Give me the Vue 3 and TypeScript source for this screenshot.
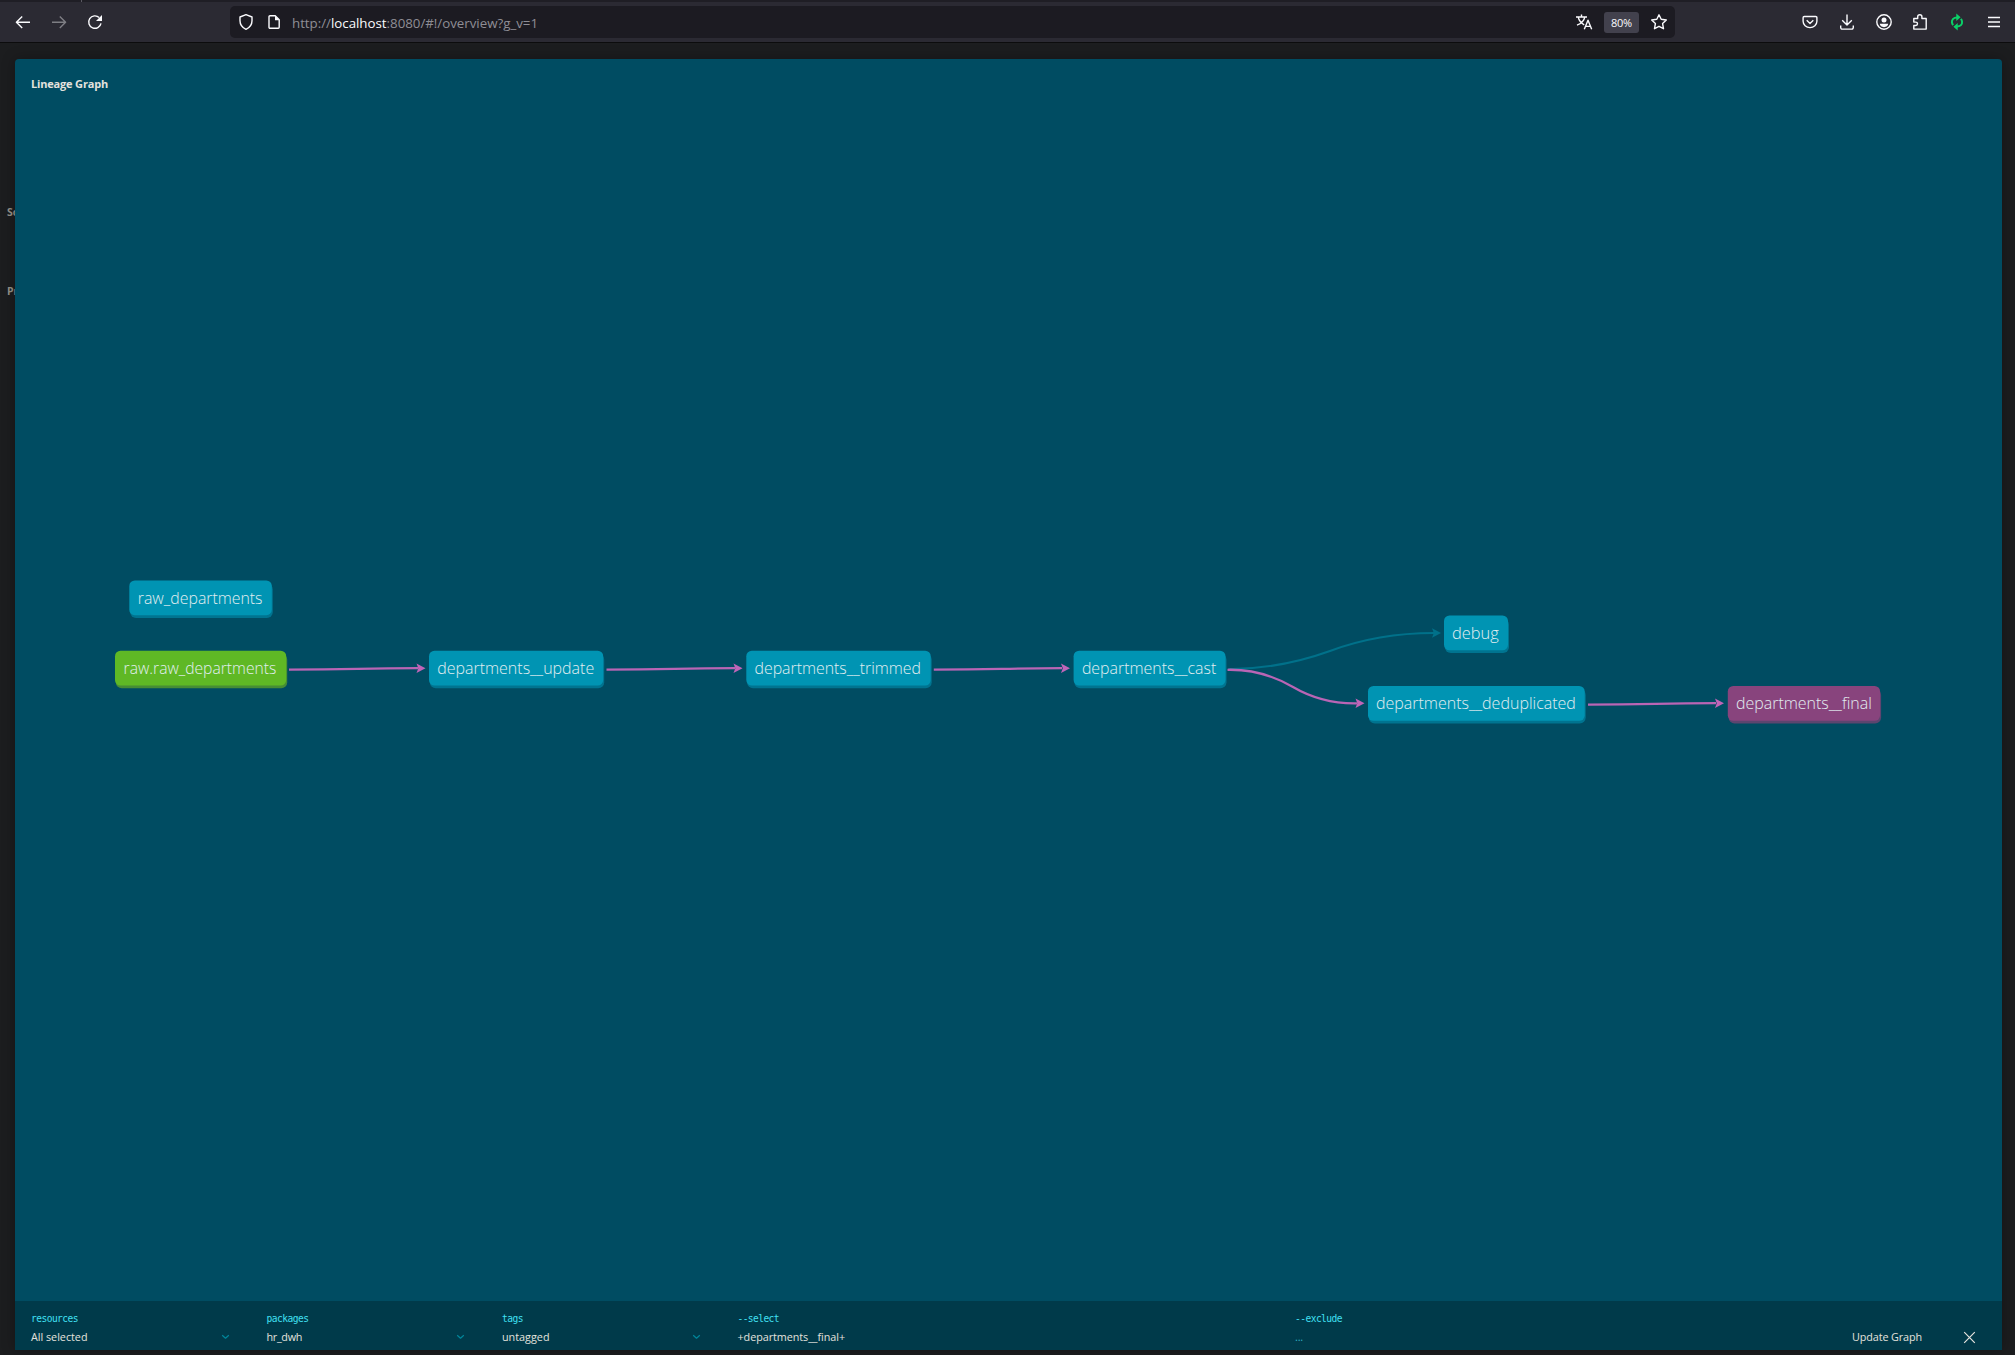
<script setup lang="ts">
interface GraphNode { label: string; x: number; y: number; w: number; tx: number; tw: number; kind: 'model' | 'source' | 'current' }
interface Edge { d: string; tipX: number; tipY: number; muted?: boolean }

const nodes: GraphNode[] = [
  { label: 'raw_departments', x: 129.3, y: 580.4, w: 142.5, tx: 137.8, tw: 124.7, kind: 'model' },
  { label: 'raw.raw_departments', x: 115, y: 650.7, w: 171.2, tx: 123.6, tw: 152.7, kind: 'source' },
  { label: 'departments__update', x: 429, y: 650.7, w: 174.2, tx: 437.2, tw: 157, kind: 'model' },
  { label: 'departments__trimmed', x: 746.3, y: 650.7, w: 184.4, tx: 754.5, tw: 166.5, kind: 'model' },
  { label: 'departments__cast', x: 1073.6, y: 650.7, w: 151.9, tx: 1081.9, tw: 134.4, kind: 'model' },
  { label: 'debug', x: 1444, y: 615.5, w: 64, tx: 1452, tw: 46.8, kind: 'model' },
  { label: 'departments__deduplicated', x: 1368, y: 686, w: 216.7, tx: 1375.9, tw: 200, kind: 'model' },
  { label: 'departments__final', x: 1727.8, y: 686, w: 152.3, tx: 1736, tw: 135.8, kind: 'current' },
]

const edges: Edge[] = [
  { d: 'M1228 669.3Q1280 669 1330 651Q1378 633 1434 633', tipX: 1440.5, tipY: 633, muted: true },
  { d: 'M289 669.6C357 669.6 357 668.2 418 668.2', tipX: 425, tipY: 668.2 },
  { d: 'M606.5 669.6C674 669.6 674 668.2 735 668.2', tipX: 742, tipY: 668.2 },
  { d: 'M933.8 669.6C1001 669.6 1001 668.2 1062 668.2', tipX: 1069.5, tipY: 668.2 },
  { d: 'M1227.5 669.8Q1262 669 1293 687Q1322 704 1357 703.3', tipX: 1364, tipY: 703.3 },
  { d: 'M1588 704.6C1655 704.6 1655 703.2 1716 703.2', tipX: 1723.5, tipY: 703.2 },
]

const filters = [
  { name: 'resources', nameW: 47, value: 'All selected', valueW: 56.5 },
  { name: 'packages', nameW: 42, value: 'hr_dwh', valueW: 35.5 },
  { name: 'tags', nameW: 21, value: 'untagged', valueW: 47.5 },
]

// Spreads letter-spacing so that a label occupies the given width.
const vFit = {
  mounted(el: HTMLElement, binding: { value: number }) {
    const width = el.getBoundingClientRect().width
    const count = (el.textContent ?? '').length
    el.style.letterSpacing = `${(binding.value - width) / count}px`
  },
}
</script>

<template>
  <div class="window">
    <div class="tabs"><i></i></div>
    <header class="toolbar">
      <nav class="nav">
        <svg width="16" height="16" viewBox="0 0 16 16"><path d="M15 8.2H1.6M7.2 2.4 1.4 8.2l5.8 5.8" /></svg>
        <svg class="dim" width="16" height="16" viewBox="0 0 16 16"><path d="M1 8.2h13.4M8.8 2.4l5.8 5.8L8.8 14" /></svg>
        <svg width="16" height="16" viewBox="0 0 16 16"><path d="M14 9.3A6.2 6.2 0 1 1 12.2 3.6" /><path class="solid" d="M15 1v6H9z" /></svg>
      </nav>
      <div class="address">
        <svg class="shield" width="16" height="18" viewBox="0 0 16 18"><path d="M8 1.6 14 4v3.8c0 4-2.2 6.8-6 8.6-3.8-1.8-6-4.6-6-8.6V4z" /></svg>
        <svg class="doc" width="14" height="16" viewBox="0 0 14 16"><path d="M3 1.8h5.2l4 4v7.4a1 1 0 0 1-1 1H3a1 1 0 0 1-1-1V2.8a1 1 0 0 1 1-1z" /><path class="solid" d="M8 1.5v4.7h4.6z" /></svg>
        <span v-fit="246" class="url">http://<b>localhost</b>:8080/#!/overview?g_v=1</span>
        <div class="address-end">
          <svg width="18" height="18" viewBox="0 0 18 18"><path d="M1 4h11M6.5 1.4V4M3.2 4.2c.7 3.2 3 6 6 7.6M9.8 4.2C9 8 5.8 10.8 2 12.2M9.3 16.2l3.7-9 3.7 9M10.5 13.4h5" /></svg>
          <span class="zoom"><span v-fit="21">80%</span></span>
          <svg class="star" width="18" height="18" viewBox="0 0 18 18"><path d="m9 1.8 2.2 4.5 5.1.7-3.7 3.6.9 5.1L9 13.3l-4.5 2.4.9-5.1L1.7 7l5.1-.7z" /></svg>
        </div>
      </div>
      <div class="tools">
        <svg width="18" height="18" viewBox="0 0 18 18"><path d="M3.3 3.5h11.4a1.200 1.200 0 0 1 1.200 1.200v3.600a6.900 6.300 0 0 1-13.800 0V4.700a1.200 1.200 0 0 1 1.200-1.200zM5.700 7.300 9 10.400l3.300-3.100" /></svg>
        <svg width="18" height="18" viewBox="0 0 18 18"><path d="M9 1.500v10.300M4.200 7.300 9 12l4.800-4.700M2.700 12.600v2a1.500 1.500 0 0 0 1.500 1.500h9.600a1.500 1.500 0 0 0 1.500-1.500v-2" /></svg>
        <svg width="18" height="18" viewBox="0 0 18 18"><circle cx="9" cy="9" r="7.200" /><circle class="solid" cx="9" cy="6.900" r="2.500" /><path class="solid" d="M4.800 10.800h8.400c0 1.800-1.800 3.400-4.200 3.400s-4.200-1.600-4.200-3.400z" /></svg>
        <svg width="18" height="18" viewBox="0 0 18 18"><path d="M2.800 5.500h3.900V3.800a2.100 2.100 0 0 1 4.200 0v1.700h4.300v10.600H2.800v-3.600h2a1.700 1.700 0 0 0 0-3.400h-2z" /></svg>
        <svg class="sync" width="18" height="18" viewBox="0 0 18 18"><path d="M9 4.400C5.600 4.400 3.700 6.700 3.900 9.200c.1 1.200.6 2.200 1.300 2.900M9 13.600c3.400 0 5.300-2.300 5.100-4.800-.1-1.200-.6-2.200-1.300-2.900" /><path class="solid" d="M8.300.6v7.400l4.300-3.700zM9.700 17.400V10l-4.300 3.700z" /></svg>
        <svg width="18" height="18" viewBox="0 0 18 18"><path d="M3 4.500h12M3 9h12M3 13.500h12" /></svg>
      </div>
    </header>

    <main class="page">
      <aside class="backdrop"><span>So</span><span>Pr</span></aside>
      <section class="panel">
        <h1><span v-fit="77">Lineage Graph</span></h1>
        <svg class="graph" width="1987" height="1242" viewBox="15 59 1987 1242">
          <g v-for="(e, i) in edges" :key="i" :class="['edge', { muted: e.muted }]">
            <path class="line" :d="e.d" />
            <path class="tip" :d="`M${e.tipX + 0.5} ${e.tipY}l-9 -4.800l1.800 4.800l-1.800 4.800z`" />
          </g>
          <g v-for="n in nodes" :key="n.label" :class="['node', n.kind]">
            <rect class="shade" :x="n.x + 0.8" :y="n.y + 3" :width="n.w + 0.2" height="34.500" rx="6" />
            <rect :x="n.x" :y="n.y" :width="n.w" height="34.800" rx="5.500" />
            <text :x="n.tx" :y="n.y + 23.2" :textLength="n.tw" lengthAdjust="spacingAndGlyphs">{{ n.label }}</text>
          </g>
        </svg>
        <footer class="filters">
          <div v-for="f in filters" :key="f.name" class="field">
            <label><span v-fit="f.nameW">{{ f.name }}</span></label>
            <p>
              <span v-fit="f.valueW">{{ f.value }}</span>
              <svg width="9" height="6" viewBox="0 0 9 6"><path d="m1.200 1.200 3.300 3 3.300-3" /></svg>
            </p>
          </div>
          <div class="field wide">
            <label><span v-fit="41.5">--select</span></label>
            <p><span v-fit="107.5">+departments__final+</span></p>
          </div>
          <div class="field last">
            <label><span v-fit="47">--exclude</span></label>
            <p class="placeholder"><span v-fit="8">...</span></p>
          </div>
          <div class="actions">
            <span v-fit="70" class="update">Update Graph</span>
            <svg width="13" height="13" viewBox="0 0 13 13"><path d="m1.200 1.200 10.600 10.600M11.800 1.200 1.200 11.800" /></svg>
          </div>
        </footer>
      </section>
    </main>
  </div>
</template>

<style>
body { margin: 0; background: #1c1d1f; }
</style>

<style scoped>
.window { width: 2015px; height: 1355px; overflow: hidden; display: flex; flex-direction: column; background: #1c1d1f; font-family: "Open Sans", "Noto Sans", sans-serif; color: #e4e2de; }
svg { display: block; flex: none; fill: none; stroke: #fbfbfe; stroke-width: 1.4; stroke-linejoin: round; }
.solid { fill: #fbfbfe; stroke: none; }
.tabs { height: 2px; background: #1f1e25; flex: none; }
.tabs i { display: block; width: 1px; height: 2px; margin-left: 81px; background: #5b5a63; }
.toolbar { height: 40px; flex: none; display: flex; align-items: center; background: #2b2a33; border-bottom: 1px solid #0c0c0d; }
.nav { display: flex; gap: 20px; width: 230px; padding-left: 15px; box-sizing: border-box; }
.nav .dim { opacity: .4; }
.address { width: 1445px; height: 32px; display: flex; align-items: center; background: #1c1b22; border-radius: 5px; }
.shield { margin-left: 8px; }
.doc { margin-left: 13px; }
.url { margin-left: 11px; font-size: 13.3px; color: #8f8e95; white-space: nowrap; padding-top: 1px; }
.url b { font-weight: 400; color: #fbfbfe; }
.address-end { margin-left: auto; display: flex; align-items: center; padding-right: 7px; }
.zoom { width: 35px; height: 21px; margin: 1px 11px 0; display: flex; align-items: center; justify-content: center; background: #42414d; border-radius: 3px; font-size: 11px; font-weight: 500; color: #fbfbfe; }
.tools { margin-left: auto; display: flex; gap: 18.8px; padding-right: 12px; }
.sync { stroke: #0bd068; stroke-width: 2; }
.sync .solid { fill: #0bd068; }
.page { flex: 1; display: flex; padding-top: 16px; }
.backdrop { width: 15px; overflow: hidden; flex: none; font-size: 10.5px; font-weight: 700; color: #96928a; }
.backdrop span { display: block; width: 20px; margin-left: 7px; line-height: 16px; }
.backdrop span:first-child { margin-top: 145px; }
.backdrop span + span { margin-top: 63px; }
.panel { width: 1987px; height: 1291px; display: grid; grid-template-rows: 1242px 49px; background: #004c62; border-radius: 4px 4px 0 0; box-shadow: 0 0 14px rgba(0, 0, 0, .3); }
h1 { grid-area: 1 / 1; margin: 17px 0 0 16px; font-size: 11px; line-height: 16px; font-weight: 700; white-space: nowrap; }
.graph { grid-area: 1 / 1; }
.line { stroke: #b965b5; stroke-width: 2.3; }
.tip { fill: #c065b8; stroke: none; }
.muted .line { stroke: #00718a; stroke-width: 2; }
.muted .tip { fill: #00718a; }
.node rect { fill: #0094b3; stroke: none; }
.node .shade { fill: #007490; }
.source rect { fill: #5fb825; }
.source .shade { fill: #468d35; }
.current rect { fill: #88447d; }
.current .shade { fill: #5c456f; }
.node text { font-size: 16.4px; font-weight: 300; fill: #e2eef1; stroke: none; }
.filters { display: flex; background: #003a4a; padding-left: 16px; }
.field { width: 235.5px; }
.field.wide { width: 557.5px; }
.field.last { flex: 1; }
label { display: block; margin-top: 10px; height: 13px; font: 400 9.6px/15px "DejaVu Sans Mono", "Liberation Mono", monospace; color: #40e0f3; white-space: nowrap; }
p { margin: 6px 0 0; height: 14px; display: flex; align-items: center; justify-content: space-between; width: 198.5px; font-size: 10.8px; line-height: 14px; white-space: nowrap; }
p svg { stroke: #00869b; stroke-width: 1.2; }
.placeholder { color: #2fb0c4; font-size: 11px; }
.actions { display: flex; align-items: center; gap: 41px; padding-right: 26px; height: 14px; margin-top: 29px; font-size: 10.8px; white-space: nowrap; }
.update { padding-bottom: 2px; }
.actions svg { stroke: #e4e2de; stroke-width: 1.2; }
</style>
